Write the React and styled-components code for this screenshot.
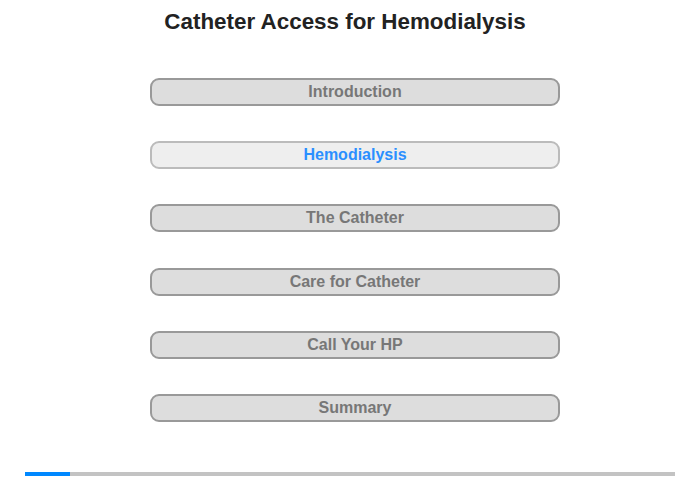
import React from "react";
import styled, { createGlobalStyle } from "styled-components";

const GlobalStyle = createGlobalStyle`
  body {
    margin: 0;
    background: #fff;
    font-family: "Liberation Sans", Arial, sans-serif;
  }
`;

const Page = styled.div`
  width: 700px;
  height: 480px;
  box-sizing: border-box;
  display: flex;
  flex-direction: column;
  align-items: center;
  padding-top: 9px;
`;

const Title = styled.h1`
  margin: 0 10px 0 0;
  font-size: 22.4px;
  line-height: 26px;
  font-weight: bold;
  color: #222;
`;

const Menu = styled.nav`
  display: flex;
  flex-direction: column;
  gap: 35.2px;
  margin: 43px 0 0 10px;
`;

const MenuButton = styled.button`
  box-sizing: border-box;
  width: 410px;
  height: 28px;
  border: 2px solid ${(p) => (p.$active ? "#bbb" : "#999")};
  border-radius: 9px;
  background: ${(p) => (p.$active ? "#eee" : "#ddd")};
  color: ${(p) => (p.$active ? "#2b8fff" : "#777")};
  font-family: "Liberation Sans", Arial, sans-serif;
  font-size: 16px;
  font-weight: bold;
  padding: 0;
  cursor: pointer;
`;

const Progress = styled.div`
  margin-top: auto;
  margin-bottom: 4px;
  width: 650px;
  height: 4px;
  background: #c3c3c3;
  display: flex;
`;

const ProgressFill = styled.div`
  height: 100%;
  background: #0088ff;
`;

const items = [
  "Introduction",
  "Hemodialysis",
  "The Catheter",
  "Care for Catheter",
  "Call Your HP",
  "Summary",
];

export default function App() {
  return (
    <Page>
      <GlobalStyle />
      <Title>Catheter Access for Hemodialysis</Title>
      <Menu>
        {items.map((label) => (
          <MenuButton key={label} $active={label === "Hemodialysis"}>
            {label}
          </MenuButton>
        ))}
      </Menu>
      <Progress>
        <ProgressFill style={{ width: `${(45 / 650) * 100}%` }} />
      </Progress>
    </Page>
  );
}
